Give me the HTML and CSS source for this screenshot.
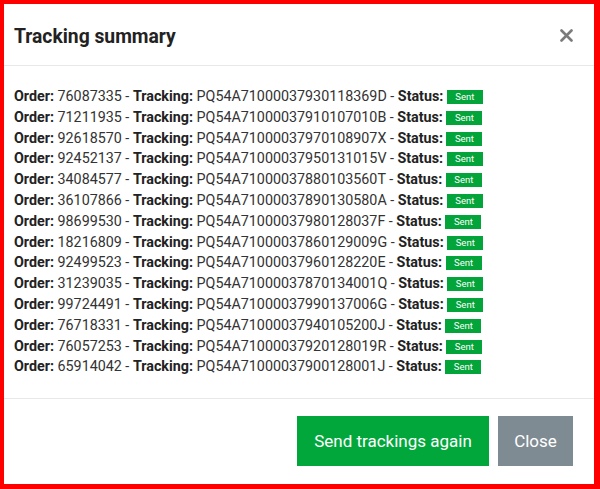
FILE: index.html
```html
<!DOCTYPE html>
<html lang="en">

<head>
    <meta charset="UTF-8">
    <meta name="viewport" content="width=device-width, initial-scale=1.0">
    <title>Tracking summary</title>
    <link rel="stylesheet" href="styles.css">
</head>

<body>
    <div class="modal">
        <!-- Header -->
        <div class="modal-header">
            <h3>Tracking summary</h3>
            <button class="close-x" aria-label="Close">
                <svg width="13" height="13" viewBox="0 0 13 13">
                    <path d="M1.5 1.5 L11.5 11.5 M11.5 1.5 L1.5 11.5" stroke="#7b7b7b" stroke-width="2.6" stroke-linecap="round" fill="none"/>
                </svg>
            </button>
        </div>

        <!-- Tracking list -->
        <div class="modal-body">
            <div class="row"><b>Order:</b> 76087335 - <b>Tracking:</b> PQ54A71000037930118369D - <b>Status:</b> <span class="badge">Sent</span></div>
            <div class="row"><b>Order:</b> 71211935 - <b>Tracking:</b> PQ54A71000037910107010B - <b>Status:</b> <span class="badge">Sent</span></div>
            <div class="row"><b>Order:</b> 92618570 - <b>Tracking:</b> PQ54A71000037970108907X - <b>Status:</b> <span class="badge">Sent</span></div>
            <div class="row"><b>Order:</b> 92452137 - <b>Tracking:</b> PQ54A71000037950131015V - <b>Status:</b> <span class="badge">Sent</span></div>
            <div class="row"><b>Order:</b> 34084577 - <b>Tracking:</b> PQ54A71000037880103560T - <b>Status:</b> <span class="badge">Sent</span></div>
            <div class="row"><b>Order:</b> 36107866 - <b>Tracking:</b> PQ54A71000037890130580A - <b>Status:</b> <span class="badge">Sent</span></div>
            <div class="row"><b>Order:</b> 98699530 - <b>Tracking:</b> PQ54A71000037980128037F - <b>Status:</b> <span class="badge">Sent</span></div>
            <div class="row"><b>Order:</b> 18216809 - <b>Tracking:</b> PQ54A71000037860129009G - <b>Status:</b> <span class="badge">Sent</span></div>
            <div class="row"><b>Order:</b> 92499523 - <b>Tracking:</b> PQ54A71000037960128220E - <b>Status:</b> <span class="badge">Sent</span></div>
            <div class="row"><b>Order:</b> 31239035 - <b>Tracking:</b> PQ54A71000037870134001Q - <b>Status:</b> <span class="badge">Sent</span></div>
            <div class="row"><b>Order:</b> 99724491 - <b>Tracking:</b> PQ54A71000037990137006G - <b>Status:</b> <span class="badge">Sent</span></div>
            <div class="row"><b>Order:</b> 76718331 - <b>Tracking:</b> PQ54A71000037940105200J - <b>Status:</b> <span class="badge">Sent</span></div>
            <div class="row"><b>Order:</b> 76057253 - <b>Tracking:</b> PQ54A71000037920128019R - <b>Status:</b> <span class="badge">Sent</span></div>
            <div class="row"><b>Order:</b> 65914042 - <b>Tracking:</b> PQ54A71000037900128001J - <b>Status:</b> <span class="badge">Sent</span></div>
        </div>

        <!-- Footer buttons -->
        <div class="modal-footer">
            <button class="btn btn-send">Send trackings again</button>
            <button class="btn btn-close">Close</button>
        </div>
    </div>
</body>

</html>
```

FILE: styles.css
```css
/* Page frame */
html, body {
    height: 100%;
}

body {
    margin: 0;
    background: #ff0000;
    font-family: Roboto, "Liberation Sans", sans-serif;
    color: #2b2b2b;
}

/* Modal box */
.modal {
    margin: 4px 6px 5px 4px;
    height: 480px;
    background: #fff;
    display: flex;
    flex-direction: column;
}

.modal-header {
    display: flex;
    align-items: center;
    justify-content: space-between;
    height: 61px;
    padding: 0 21px 0 10px;
    border-bottom: 1px solid #e8e8e8;
}

.modal-header h3 {
    margin: 0;
    font-size: 19.3px;
    font-weight: 700;
    color: #222;
    padding-top: 3px;
}

.close-x {
    border: 0;
    background: none;
    padding: 0;
    margin-top: 2px;
    display: flex;
}

/* List of trackings */
.modal-body {
    flex: 1;
    padding: 20px 10px 17px;
    font-size: 14.3px;
    line-height: 20.8px;
    color: #333;
}

.modal-body b {
    font-weight: 700;
    color: #222;
}

.badge {
    display: inline-block;
    background: #03a43a;
    color: #fff;
    font-size: 9.5px;
    line-height: 14px;
    padding: 0 5px;
    vertical-align: 1px;
    min-width: 26px;
    text-align: center;
}

/* Footer */
.modal-footer {
    display: flex;
    justify-content: flex-end;
    gap: 9px;
    padding: 17px 21px 18px;
    border-top: 1px solid #e8e8e8;
}

.btn {
    height: 50px;
    border: 0;
    font-family: Roboto, "Liberation Sans", sans-serif;
    font-size: 17px;
    color: #fff;
    padding: 0 12px;
}

.btn-send {
    width: 192px;
    background: #02a73b;
}

.btn-close {
    width: 75px;
    background: #7f8b93;
}
```
